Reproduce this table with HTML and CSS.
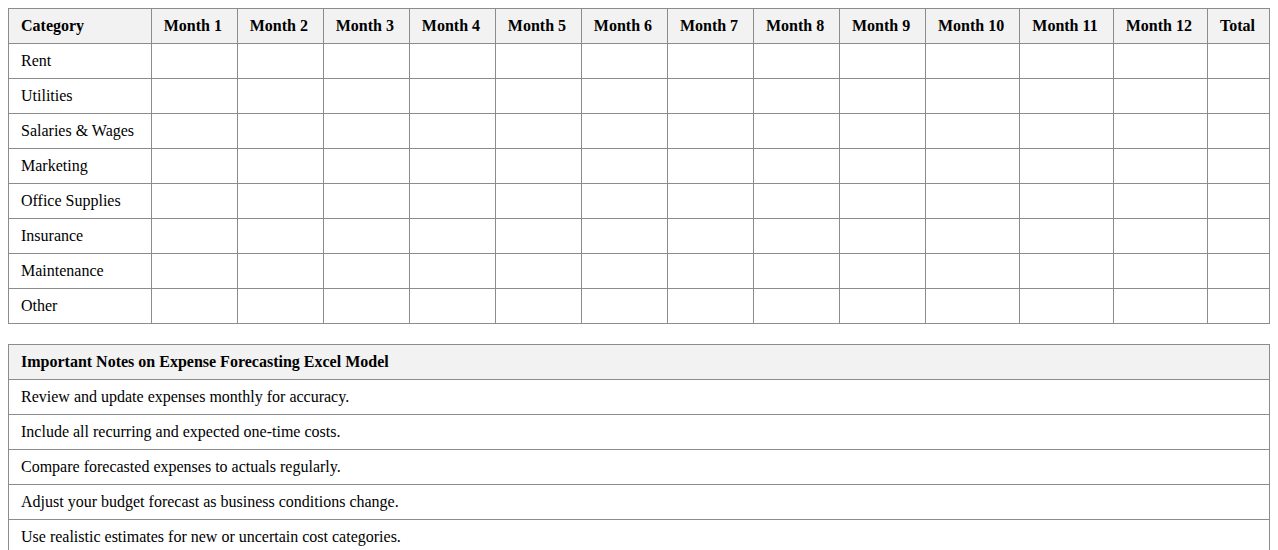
FILE: index.html
```html
<!DOCTYPE html>
<html>
<head>
<meta charset="utf-8">
<link rel="stylesheet" href="styles.css">
</head>
<body>
<table class="grid">
  <thead>
    <tr>
      <th>Category</th><th>Month 1</th><th>Month 2</th><th>Month 3</th><th>Month 4</th><th>Month 5</th><th>Month 6</th><th>Month 7</th><th>Month 8</th><th>Month 9</th><th>Month 10</th><th>Month 11</th><th>Month 12</th><th>Total</th>
    </tr>
  </thead>
  <tbody>
    <tr><td>Rent</td><td></td><td></td><td></td><td></td><td></td><td></td><td></td><td></td><td></td><td></td><td></td><td></td><td></td></tr>
    <tr><td>Utilities</td><td></td><td></td><td></td><td></td><td></td><td></td><td></td><td></td><td></td><td></td><td></td><td></td><td></td></tr>
    <tr><td>Salaries &amp; Wages</td><td></td><td></td><td></td><td></td><td></td><td></td><td></td><td></td><td></td><td></td><td></td><td></td><td></td></tr>
    <tr><td>Marketing</td><td></td><td></td><td></td><td></td><td></td><td></td><td></td><td></td><td></td><td></td><td></td><td></td><td></td></tr>
    <tr><td>Office Supplies</td><td></td><td></td><td></td><td></td><td></td><td></td><td></td><td></td><td></td><td></td><td></td><td></td><td></td></tr>
    <tr><td>Insurance</td><td></td><td></td><td></td><td></td><td></td><td></td><td></td><td></td><td></td><td></td><td></td><td></td><td></td></tr>
    <tr><td>Maintenance</td><td></td><td></td><td></td><td></td><td></td><td></td><td></td><td></td><td></td><td></td><td></td><td></td><td></td></tr>
    <tr><td>Other</td><td></td><td></td><td></td><td></td><td></td><td></td><td></td><td></td><td></td><td></td><td></td><td></td><td></td></tr>
  </tbody>
</table>
<table class="grid notes">
  <thead>
    <tr><th>Important Notes on Expense Forecasting Excel Model</th></tr>
  </thead>
  <tbody>
    <tr><td>Review and update expenses monthly for accuracy.</td></tr>
    <tr><td>Include all recurring and expected one-time costs.</td></tr>
    <tr><td>Compare forecasted expenses to actuals regularly.</td></tr>
    <tr><td>Adjust your budget forecast as business conditions change.</td></tr>
    <tr><td>Use realistic estimates for new or uncertain cost categories.</td></tr>
  </tbody>
</table>
</body>
</html>
```

FILE: styles.css
```css
body {
  margin: 8px;
  font-family: "Liberation Serif", "Times New Roman", serif;
  font-size: 16px;
  color: #000;
  background: #fff;
}
.grid {
  width: 100%;
  border-collapse: collapse;
  margin-bottom: 20px;
}
.grid th,
.grid td {
  border: 1px solid #8c8c8c;
  padding: 8px 12px;
  text-align: left;
  height: 18px;
  line-height: 18px;
}
.grid th {
  background: #f2f2f2;
  font-weight: bold;
}
```
